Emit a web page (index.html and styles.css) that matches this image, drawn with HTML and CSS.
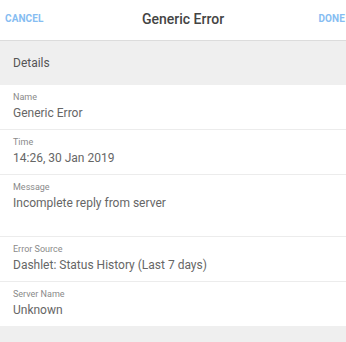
FILE: index.html
```html
<!DOCTYPE html>
<html lang="en">
<head>
    <meta charset="UTF-8">
    <meta name="viewport" content="width=device-width, initial-scale=1.0">
    <title>Generic Error</title>
    <link rel="stylesheet" href="styles.css">
</head>
<body>
    <div id="screen">
        <div id="topBar">
            <a href="#" class="barBtn">CANCEL</a>
            <h1>Generic Error</h1>
            <a href="#" class="barBtn">DONE</a>
        </div>
        <div class="sectionHeader">Details</div>
        <div class="fieldList">
            <div class="field">
                <span class="fieldLabel">Name</span>
                <span class="fieldValue">Generic Error</span>
            </div>
            <div class="field">
                <span class="fieldLabel">Time</span>
                <span class="fieldValue">14:26, 30 Jan 2019</span>
            </div>
            <div class="field tall">
                <span class="fieldLabel">Message</span>
                <span class="fieldValue">Incomplete reply from server</span>
            </div>
            <div class="field">
                <span class="fieldLabel">Error Source</span>
                <span class="fieldValue">Dashlet: Status History (Last 7 days)</span>
            </div>
            <div class="field last">
                <span class="fieldLabel">Server Name</span>
                <span class="fieldValue">Unknown</span>
            </div>
        </div>
        <div class="footer"></div>
    </div>
</body>
</html>
```

FILE: styles.css
```css
* {
    box-sizing: border-box;
}

body {
    font-family: Roboto, "Liberation Sans", sans-serif;
    margin: 0;
    padding: 0;
    background-color: #efefef;
    overflow: hidden;
}

#screen {
    display: flex;
    flex-direction: column;
    width: 346px;
    height: 342px;
}

#topBar {
    display: flex;
    justify-content: space-between;
    align-items: center;
    height: 41px;
    padding: 0 1px 3px 5px;
    background-color: #ffffff;
    border-bottom: 1px solid #dcdcdc;
}

#topBar h1 {
    margin: 0;
    font-size: 14px;
    font-weight: 500;
    color: #444444;
    padding-left: 4px;
}

.barBtn {
    font-size: 10px;
    font-weight: 700;
    color: #86bdf2;
    text-decoration: none;
    letter-spacing: 0.1px;
}

.sectionHeader {
    display: flex;
    align-items: center;
    height: 44px;
    padding: 0 13px 1px;
    font-size: 12px;
    color: #555555;
    background-color: #efefef;
}

.fieldList {
    display: flex;
    flex-direction: column;
    background-color: #ffffff;
}

.field {
    display: flex;
    flex-direction: column;
    height: 45px;
    padding: 6px 13px 0;
    border-bottom: 1px solid #ececec;
}

.field.tall {
    height: 62px;
}

.field.last {
    height: 44px;
    border-bottom: none;
}

.fieldLabel {
    font-size: 9px;
    line-height: 12px;
    color: #8a8a8a;
    margin-bottom: 2px;
}

.fieldValue {
    font-size: 12px;
    line-height: 16px;
    color: #666666;
}

.footer {
    flex: 1;
    background-color: #efefef;
}
```
